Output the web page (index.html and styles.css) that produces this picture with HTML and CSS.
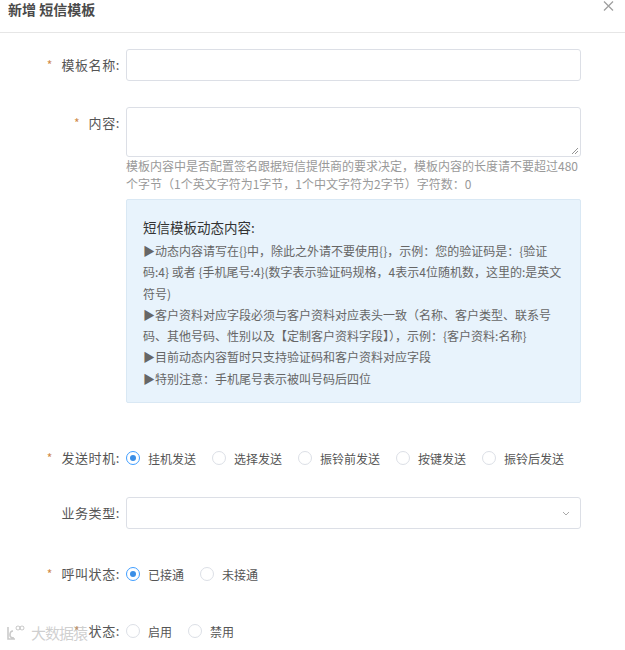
FILE: index.html
```html
<!DOCTYPE html>
<html lang="zh-CN">
<head>
<meta charset="utf-8">
<title>新增 短信模板</title>
<link rel="stylesheet" href="styles.css">
</head>
<body>
<div class="dialog">
  <div class="dialog-header">
    <span class="dialog-title">新增 短信模板</span>
    <span class="dialog-close">
      <svg width="11" height="10" viewBox="0 0 11 10"><path d="M1 0.5L10 9.5M10 0.5L1 9.5" stroke="#a0a0a0" stroke-width="1.3" fill="none"/></svg>
    </span>
  </div>
  <div class="form">
    <div class="form-item row-name">
      <label class="form-label"><span class="req">*</span>模板名称:</label>
      <div class="form-content"><div class="input"></div></div>
    </div>
    <div class="form-item row-content">
      <label class="form-label"><span class="req">*</span>内容:</label>
      <div class="form-content">
        <div class="textarea">
          <svg class="resize" width="7" height="7" viewBox="0 0 7 7"><path d="M1 7L7 1M4 7L7 4" stroke="#888" stroke-width="0.9"/></svg>
        </div>
        <div class="help">模板内容中是否配置签名跟据短信提供商的要求决定，模板内容的长度请不要超过480<br>个字节（1个英文字符为1字节，1个中文字符为2字节）字符数：0</div>
        <div class="info">
          <div class="info-title">短信模板动态内容:</div>
          <div class="info-body">▶动态内容请写在{}中，除此之外请不要使用{}，示例：您的验证码是：{验证<br>码:4} 或者 {手机尾号:4}(数字表示验证码规格，4表示4位随机数，这里的:是英文<br>符号)<br>▶客户资料对应字段必须与客户资料对应表头一致（名称、客户类型、联系号<br>码、其他号码、性别以及【定制客户资料字段】），示例：{客户资料:名称}<br>▶目前动态内容暂时只支持验证码和客户资料对应字段<br>▶特别注意：手机尾号表示被叫号码后四位</div>
        </div>
      </div>
    </div>
    <div class="form-item row-timing">
      <label class="form-label"><span class="req">*</span>发送时机:</label>
      <div class="form-content radios">
        <span class="radio checked"><i></i>挂机发送</span>
        <span class="radio"><i></i>选择发送</span>
        <span class="radio"><i></i>振铃前发送</span>
        <span class="radio"><i></i>按键发送</span>
        <span class="radio"><i></i>振铃后发送</span>
      </div>
    </div>
    <div class="form-item row-type">
      <label class="form-label">业务类型:</label>
      <div class="form-content">
        <div class="input select">
          <svg width="8" height="5" viewBox="0 0 8 5"><path d="M1 1L4 4L7 1" stroke="#aaa" stroke-width="1" fill="none"/></svg>
        </div>
      </div>
    </div>
    <div class="form-item row-call">
      <label class="form-label"><span class="req">*</span>呼叫状态:</label>
      <div class="form-content radios">
        <span class="radio checked"><i></i>已接通</span>
        <span class="radio"><i></i>未接通</span>
      </div>
    </div>
    <div class="form-item row-status">
      <label class="form-label"><span class="req">*</span>状态:</label>
      <div class="form-content radios">
        <span class="radio"><i></i>启用</span>
        <span class="radio"><i></i>禁用</span>
      </div>
    </div>
  </div>
  <div class="watermark">
    <svg width="20" height="16" viewBox="0 0 20 16"><path d="M3 2V14H10M8 6C6 6 5 8 5 10S7 13 9 13" stroke="rgba(150,150,150,0.5)" stroke-width="1.6" fill="none"/><circle cx="13" cy="3" r="2" stroke="rgba(150,150,150,0.5)" fill="none"/><circle cx="17" cy="3" r="2" stroke="rgba(150,150,150,0.5)" fill="none"/></svg>
    <span>大数据猿</span>
  </div>
</div>
</body>
</html>
```
FILE: styles.css
```css
* { box-sizing: border-box; }
html, body { margin: 0; padding: 0; background: #fff; }
body {
  font-family: "Noto Sans CJK SC", "Microsoft YaHei", sans-serif;
  color: #555;
  width: 625px;
  height: 650px;
  overflow: hidden;
}
.dialog { position: relative; height: 650px; }
.dialog-header {
  height: 33px;
  border-bottom: 1px solid #e6e6e6;
  display: flex;
  justify-content: space-between;
  padding: 0 11px 0 8px;
}
.dialog-title {
  font-size: 14px;
  font-weight: bold;
  color: #4a4a4a;
  line-height: 18px;
}
.dialog-close { margin-top: 1px; height: 12px; }
.dialog-close svg { display: block; }

.form { padding-top: 16px; }
.form-item { display: flex; align-items: flex-start; }
.form-label {
  width: 120px;
  margin-right: 6px;
  text-align: right;
  font-size: 13px;
  line-height: 32px;
  color: #555;
  letter-spacing: 0.6px;
  flex: none;
}
.req { color: #d08a4a; margin-right: 9px; font-size: 12px; letter-spacing: 0; }
.form-content { width: 455px; }

.input {
  height: 32px;
  border: 1px solid #dcdfe6;
  border-radius: 3px;
  background: #fff;
}
.select { display: flex; align-items: center; justify-content: flex-end; padding-right: 10px; }
.select svg { display: block; }

.row-content { margin-top: 26px; }
.textarea {
  position: relative;
  height: 50px;
  border: 1px solid #dcdfe6;
  border-radius: 3px;
}
.resize { position: absolute; right: 2px; bottom: 2px; }
.help {
  font-size: 12px;
  line-height: 18px;
  color: #999;
  white-space: nowrap;
}
.info {
  margin-top: 6px;
  height: 204px;
  background: #e8f3fc;
  border: 1px solid #d9e8f4;
  border-radius: 2px;
  padding: 17px 16px 0 16px;
}
.info-title {
  font-size: 13.5px;
  line-height: 20px;
  color: #333;
  margin-bottom: 3px;
}
.info-body {
  font-size: 12px;
  line-height: 21.3px;
  color: #666;
  white-space: nowrap;
}

.row-timing { margin-top: 39px; }
.row-type { margin-top: 23px; }
.row-call { margin-top: 29px; }
.row-status { margin-top: 25px; }

.radios { display: flex; align-items: center; height: 32px; }
.radio {
  display: flex;
  align-items: center;
  font-size: 12px;
  color: #555;
  margin-right: 16px;
}
.radio i {
  width: 14px;
  height: 14px;
  border: 1px solid #dcdfe6;
  border-radius: 50%;
  margin-right: 8px;
  position: relative;
  background: #fff;
}
.radio.checked i { border-color: #409eff; }
.radio.checked i::after {
  content: "";
  position: absolute;
  left: 3px; top: 3px;
  width: 6px; height: 6px;
  border-radius: 50%;
  background: #3a8ee6;
}

.watermark {
  position: absolute;
  left: 5px;
  top: 622px;
  display: flex;
  align-items: center;
  gap: 6px;
  font-size: 15px;
  color: rgba(160,160,160,0.5);
  letter-spacing: -1px;
}
.watermark svg { display: block; }
```
